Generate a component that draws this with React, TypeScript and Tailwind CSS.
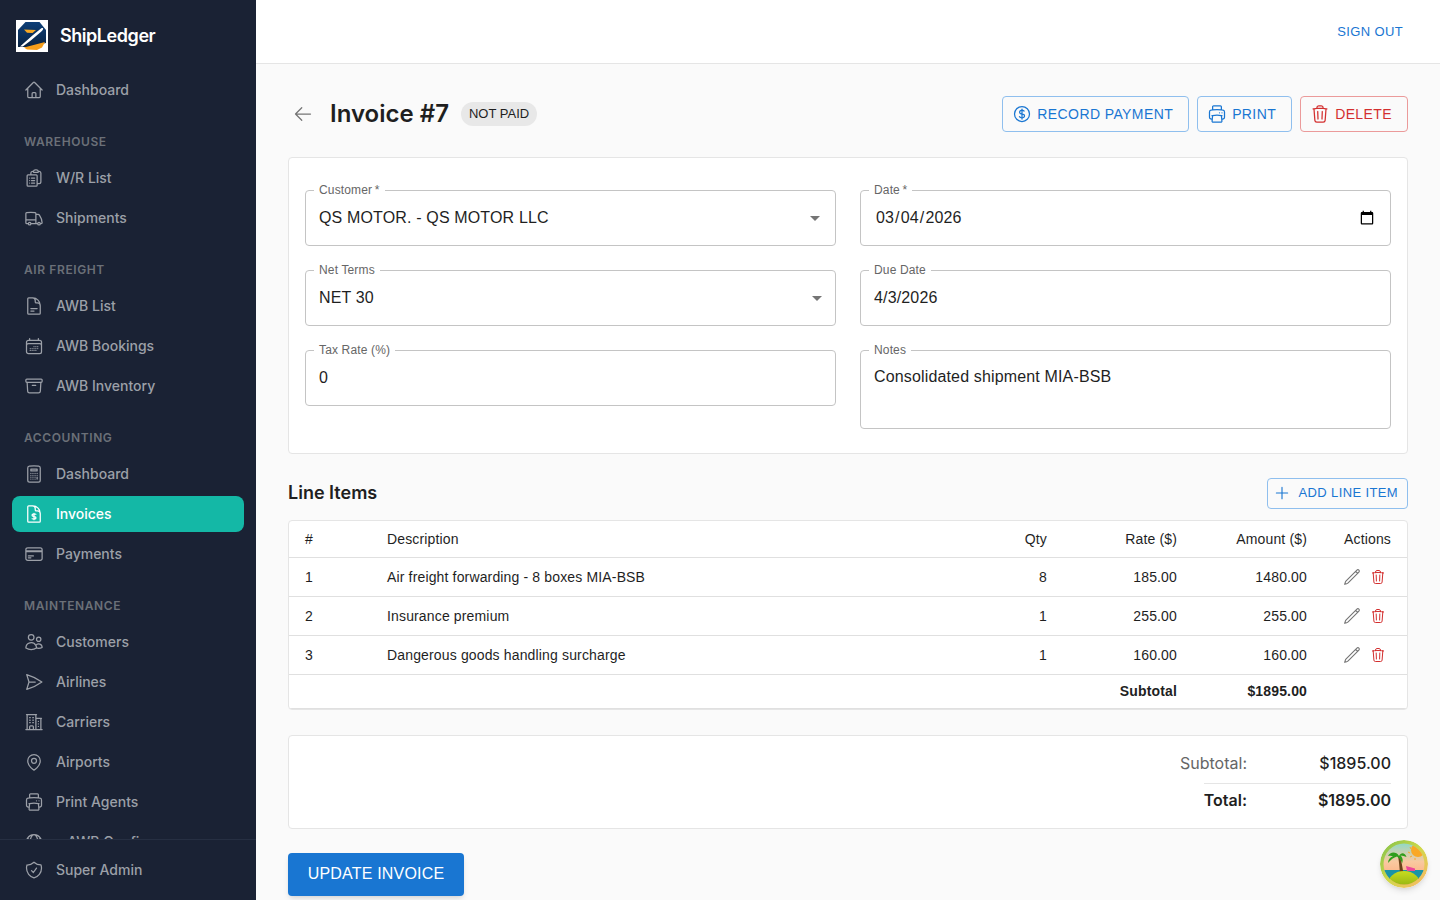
import type { ComponentType, ReactNode } from 'react';
import {
  HiOutlineArchiveBox,
  HiOutlineArrowLeft,
  HiOutlineBuildingOffice2,
  HiOutlineCalculator,
  HiOutlineCalendarDays,
  HiOutlineClipboardDocumentList,
  HiOutlineCreditCard,
  HiOutlineCurrencyDollar,
  HiOutlineDocumentCurrencyDollar,
  HiOutlineDocumentText,
  HiOutlineGlobeAlt,
  HiOutlineHome,
  HiOutlineMapPin,
  HiOutlinePaperAirplane,
  HiOutlinePencil,
  HiOutlinePlus,
  HiOutlinePrinter,
  HiOutlineShieldCheck,
  HiOutlineTrash,
  HiOutlineTruck,
  HiOutlineUsers,
} from 'react-icons/hi2';

type Icon = ComponentType<{ className?: string }>;

interface NavEntry {
  label: string;
  icon: Icon;
  active?: boolean;
}

const sections: { title: string; items: NavEntry[] }[] = [
  {
    title: 'WAREHOUSE',
    items: [
      { label: 'W/R List', icon: HiOutlineClipboardDocumentList },
      { label: 'Shipments', icon: HiOutlineTruck },
    ],
  },
  {
    title: 'AIR FREIGHT',
    items: [
      { label: 'AWB List', icon: HiOutlineDocumentText },
      { label: 'AWB Bookings', icon: HiOutlineCalendarDays },
      { label: 'AWB Inventory', icon: HiOutlineArchiveBox },
    ],
  },
  {
    title: 'ACCOUNTING',
    items: [
      { label: 'Dashboard', icon: HiOutlineCalculator },
      { label: 'Invoices', icon: HiOutlineDocumentCurrencyDollar, active: true },
      { label: 'Payments', icon: HiOutlineCreditCard },
    ],
  },
  {
    title: 'MAINTENANCE',
    items: [
      { label: 'Customers', icon: HiOutlineUsers },
      { label: 'Airlines', icon: HiOutlinePaperAirplane },
      { label: 'Carriers', icon: HiOutlineBuildingOffice2 },
      { label: 'Airports', icon: HiOutlineMapPin },
      { label: 'Print Agents', icon: HiOutlinePrinter },
      { label: '   AWB Config', icon: HiOutlineGlobeAlt },
    ],
  },
];

const lineItems = [
  { id: 1, description: 'Air freight forwarding - 8 boxes MIA-BSB', qty: 8, rate: '185.00', amount: '1480.00' },
  { id: 2, description: 'Insurance premium', qty: 1, rate: '255.00', amount: '255.00' },
  { id: 3, description: 'Dangerous goods handling surcharge', qty: 1, rate: '160.00', amount: '160.00' },
];

function NavItem({ item }: { item: NavEntry }) {
  const Glyph = item.icon;
  return (
    <div
      className={`flex h-9 shrink-0 items-center gap-[12px] rounded-lg px-[12px] text-sm font-medium ${
        item.active ? 'bg-[#14b8a6] text-white' : 'text-[#9ca0a8]'
      }`}
    >
      <Glyph className="h-5 w-5 shrink-0" />
      <span className="whitespace-pre">{item.label}</span>
    </div>
  );
}

function Logo() {
  return (
    <svg viewBox="0 0 32 32" className="h-8 w-8 shrink-0">
      <defs>
        <linearGradient id="hexFill" x1="0" y1="0" x2="0" y2="1">
          <stop offset="0" stopColor="#0d3f78" />
          <stop offset="1" stopColor="#0a2342" />
        </linearGradient>
      </defs>
      <rect width="32" height="32" fill="#fff" />
      <path d="M9.500 2h14L30 10v13l-17 4H2V10z" fill="url(#hexFill)" />
      <path d="M11 29.500l-3-2 21-5.500-3 5.500-5 2.500z" fill="#f59e1b" />
      <path d="M4 26.500L17 15l8-6.500c1.500-.8 2.500-.4 2 1-.4 1-1.200 1.800-2.200 2.500l-10 8.500-8 6z" fill="#fff" />
      <path d="M8 9.500l12 .5-3.500 3-5.500-.3z" fill="#f7a823" />
    </svg>
  );
}

function Sidebar() {
  return (
    <aside className="flex h-full w-64 shrink-0 flex-col bg-[#1a2234]">
      <div className="flex h-[72px] shrink-0 items-center gap-3 pl-4">
        <Logo />
        <span className="text-lg font-semibold tracking-tight text-white">ShipLedger</span>
      </div>
      <nav className="flex min-h-0 flex-1 flex-col gap-6 overflow-hidden px-3">
        <NavItem item={{ label: 'Dashboard', icon: HiOutlineHome }} />
        {sections.map((section) => (
          <div key={section.title} className="flex shrink-0 flex-col gap-1">
            <div className="mb-1 flex h-5 items-center px-3 text-xs font-semibold tracking-[0.6px] text-[#6b7078]">
              {section.title}
            </div>
            {section.items.map((item) => (
              <NavItem key={item.label} item={item} />
            ))}
          </div>
        ))}
      </nav>
      <div className="shrink-0 border-t border-[#262f42] p-3">
        <NavItem item={{ label: 'Super Admin', icon: HiOutlineShieldCheck }} />
      </div>
    </aside>
  );
}

function OutlineButton({ icon: Glyph, tone, children }: { icon: Icon; tone: 'blue' | 'red'; children: ReactNode }) {
  return (
    <button
      className={`flex h-9 items-center gap-[5px] rounded border pl-[9px] pr-[15px] text-sm tracking-[0.4px] ${
        tone === 'blue' ? 'border-[#8fbfee] text-[#1976d2]' : 'border-[#eb9a9a] text-[#d32f2f]'
      }`}
    >
      <Glyph className="h-5 w-5" />
      {children}
    </button>
  );
}

function Field({
  label,
  required,
  className = '',
  children,
}: {
  label: string;
  required?: boolean;
  className?: string;
  children: ReactNode;
}) {
  return (
    <div className={`relative rounded border border-[#c4c4c4] ${className}`}>
      <span className="absolute -top-[9px] left-[8px] bg-white px-[5px] text-xs leading-4 tracking-[0.15px] text-[#666]">
        {label}
        {required && <span>{'\u2009*'}</span>}
      </span>
      {children}
    </div>
  );
}

function SelectValue({ value, arrowClass }: { value: string; arrowClass: string }) {
  return (
    <div className="flex h-full items-center justify-between pl-[13px] text-base tracking-[0.15px] text-[#1f1f1f]">
      <span>{value}</span>
      <svg viewBox="0 0 24 24" className={`h-6 w-6 fill-[#757575] ${arrowClass}`}>
        <path d="M7 10l5 5 5-5z" />
      </svg>
    </div>
  );
}

function TextValue({ value }: { value: string }) {
  return <div className="flex h-full items-center px-[13px] text-base tracking-[0.15px] text-[#1f1f1f]">{value}</div>;
}

function Avatar() {
  return (
    <svg viewBox="0 0 48 48" className="absolute bottom-3 right-3 h-12 w-12 rounded-full shadow-md">
      <defs>
        <linearGradient id="ring" x1="0" y1="0" x2="1" y2="1">
          <stop offset="0" stopColor="#7cc04a" />
          <stop offset="0.5" stopColor="#cfd94a" />
          <stop offset="1" stopColor="#ffb46a" />
        </linearGradient>
        <linearGradient id="sky" x1="0" y1="0" x2="0" y2="1">
          <stop offset="0" stopColor="#7fdccb" />
          <stop offset="0.45" stopColor="#f9c9a0" />
          <stop offset="1" stopColor="#ff9f6e" />
        </linearGradient>
        <linearGradient id="hill" x1="0" y1="0" x2="0" y2="1">
          <stop offset="0" stopColor="#c9dc1e" />
          <stop offset="1" stopColor="#5f8f08" />
        </linearGradient>
        <clipPath id="inner">
          <circle cx="24" cy="24" r="20.500" />
        </clipPath>
      </defs>
      <circle cx="24" cy="24" r="24" fill="url(#ring)" />
      <g clipPath="url(#inner)">
        <rect width="48" height="48" fill="url(#sky)" />
        <circle cx="38" cy="10" r="7" fill="#f9a825" />
        <path d="M30 7l1 2M28 12l2 1M30 17l2-1M35 20l0-2" stroke="#f9a825" strokeWidth="1" />
        <rect x="0" y="30" width="48" height="9" fill="#1a94a6" />
        <path d="M26 26l9 2.500v2.500h-8z" fill="#ec4899" />
        <path d="M18 16c1 5 1.500 11 2 18h3.500c-1-7-2-13-4-18z" fill="#6b4219" />
        <path d="M19 16c-3-5-9-4-11 0 2-.5 3.500-.5 5 .3-3 .8-5 3.500-5 6.700 3-3.500 5.500-5.500 9-6.500 2.500 1.800 4.500 4 5 7 1.500-3.500.5-6-1.500-8 2 0 4 .5 6 1.500-1.500-4.500-5.500-5-7.500-1z" fill="#2f9e1c" />
        <ellipse cx="24" cy="46" rx="17" ry="15" fill="url(#hill)" />
      </g>
    </svg>
  );
}

export default function App() {
  return (
    <div className="relative flex h-screen w-full overflow-hidden bg-[#fafafa] font-['Inter',sans-serif] text-[#1f1f1f]">
      <Sidebar />
      <div className="flex min-w-0 flex-1 flex-col">
        <header className="flex h-16 shrink-0 items-center justify-end border-b border-[#e5e5e5] bg-white pr-[37px]">
          <span className="font-['Liberation_Sans',sans-serif] text-[13px] tracking-[0.37px] text-[#1976d2]">SIGN OUT</span>
        </header>
        <main className="min-h-0 flex-1 overflow-hidden px-8 pt-8">
          <div className="flex h-9 items-center justify-between">
            <div className="flex items-center">
              <HiOutlineArrowLeft className="ml-[5px] h-[20px] w-[20px] text-[#757575]" />
              <h1 className="ml-[17px] text-2xl font-semibold">Invoice #7</h1>
              <span className="ml-3 flex h-6 items-center rounded-full bg-[#e8e8e8] px-2 font-['Liberation_Sans',sans-serif] text-[13px]">
                NOT PAID
              </span>
            </div>
            <div className="flex gap-2 font-['Liberation_Sans',sans-serif]">
              <OutlineButton icon={HiOutlineCurrencyDollar} tone="blue">RECORD PAYMENT</OutlineButton>
              <OutlineButton icon={HiOutlinePrinter} tone="blue">PRINT</OutlineButton>
              <OutlineButton icon={HiOutlineTrash} tone="red">DELETE</OutlineButton>
            </div>
          </div>

          <section className="mt-[25px] grid h-[297px] grid-cols-2 content-start gap-x-6 gap-y-6 rounded border border-[#e5e5e5] bg-white px-4 pt-8 font-['Liberation_Sans',sans-serif]">
            <Field label="Customer" required className="h-14">
              <SelectValue value="QS MOTOR. - QS MOTOR LLC" arrowClass="mr-[8px]" />
            </Field>
            <Field label="Date" required className="h-14">
              <input
                type="date"
                defaultValue="2026-03-04"
                className="h-full w-full pl-[14px] pr-[13px] text-base tracking-[0.15px] text-[#1f1f1f] outline-none"
              />
            </Field>
            <Field label="Net Terms" className="h-14">
              <SelectValue value="NET 30" arrowClass="mr-[6px]" />
            </Field>
            <Field label="Due Date" className="h-14">
              <TextValue value="4/3/2026" />
            </Field>
            <Field label="Tax Rate (%)" className="h-14">
              <TextValue value="0" />
            </Field>
            <Field label="Notes" className="h-[79px]">
              <div className="px-[13px] pt-[14px] text-base leading-6 tracking-[0.15px] text-[#1f1f1f]">
                Consolidated shipment MIA-BSB
              </div>
            </Field>
          </section>

          <div className="mt-6 flex h-[30px] items-center justify-between">
            <h2 className="text-lg font-semibold">Line Items</h2>
            <button className="flex h-[31px] items-center gap-2 rounded border border-[#8fbfee] pl-[5px] pr-[9px] font-['Liberation_Sans',sans-serif] text-[13px] tracking-[0.37px] text-[#1976d2]">
              <HiOutlinePlus className="h-[18px] w-[18px]" />
              ADD LINE ITEM
            </button>
          </div>

          <div className="mt-3 overflow-hidden rounded border border-[#e5e5e5] bg-white font-['Liberation_Sans',sans-serif]">
            <table className="w-full table-fixed text-sm tracking-[0.15px]">
              <colgroup>
                <col className="w-[82px]" />
                <col />
                <col className="w-[100px]" />
                <col className="w-[130px]" />
                <col className="w-[130px]" />
                <col className="w-[84px]" />
              </colgroup>
              <thead>
                <tr className="h-[36px] border-b border-[#e0e0e0]">
                  <th className="px-4 text-left font-normal">#</th>
                  <th className="px-4 text-left font-normal">Description</th>
                  <th className="px-4 text-right font-normal">Qty</th>
                  <th className="px-4 text-right font-normal">Rate ($)</th>
                  <th className="px-4 text-right font-normal">Amount ($)</th>
                  <th className="px-4 text-right font-normal">Actions</th>
                </tr>
              </thead>
              <tbody>
                {lineItems.map((row) => (
                  <tr key={row.id} className="h-[39px] border-b border-[#e0e0e0]">
                    <td className="px-4">{row.id}</td>
                    <td className="px-4">{row.description}</td>
                    <td className="px-4 text-right">{row.qty}</td>
                    <td className="px-4 text-right">{row.rate}</td>
                    <td className="px-4 text-right">{row.amount}</td>
                    <td className="px-4">
                      <div className="mr-[5px] flex items-center justify-end gap-[9px]">
                        <HiOutlinePencil className="h-[18px] w-[18px] text-[#757575]" />
                        <HiOutlineTrash className="h-4 w-4 text-[#d32f2f]" />
                      </div>
                    </td>
                  </tr>
                ))}
                <tr className="h-[34px] border-b border-[#e0e0e0] font-bold">
                  <td colSpan={3} />
                  <td className="px-4 text-right">Subtotal</td>
                  <td className="px-4 text-right">$1895.00</td>
                  <td />
                </tr>
              </tbody>
            </table>
          </div>

          <section className="mt-[25px] flex h-[94px] flex-col items-end rounded border border-[#e5e5e5] bg-white px-4 pt-[15px] text-base">
            <div className="flex h-6 items-center">
              <span className="text-[#666]">Subtotal:</span>
              <span className="w-[144px] text-right font-medium">$1895.00</span>
            </div>
            <div className="mt-2 w-[187px] border-t border-[#e5e5e5]" />
            <div className="mt-1 flex h-6 items-center font-semibold">
              <span>Total:</span>
              <span className="w-[144px] text-right">$1895.00</span>
            </div>
          </section>

          <button className="mt-6 flex h-[43px] w-[176px] items-center justify-center rounded bg-[#1976d2] font-['Liberation_Sans',sans-serif] text-base tracking-[0.2px] text-white shadow-md">
            UPDATE INVOICE
          </button>
        </main>
      </div>
      <Avatar />
    </div>
  );
}
